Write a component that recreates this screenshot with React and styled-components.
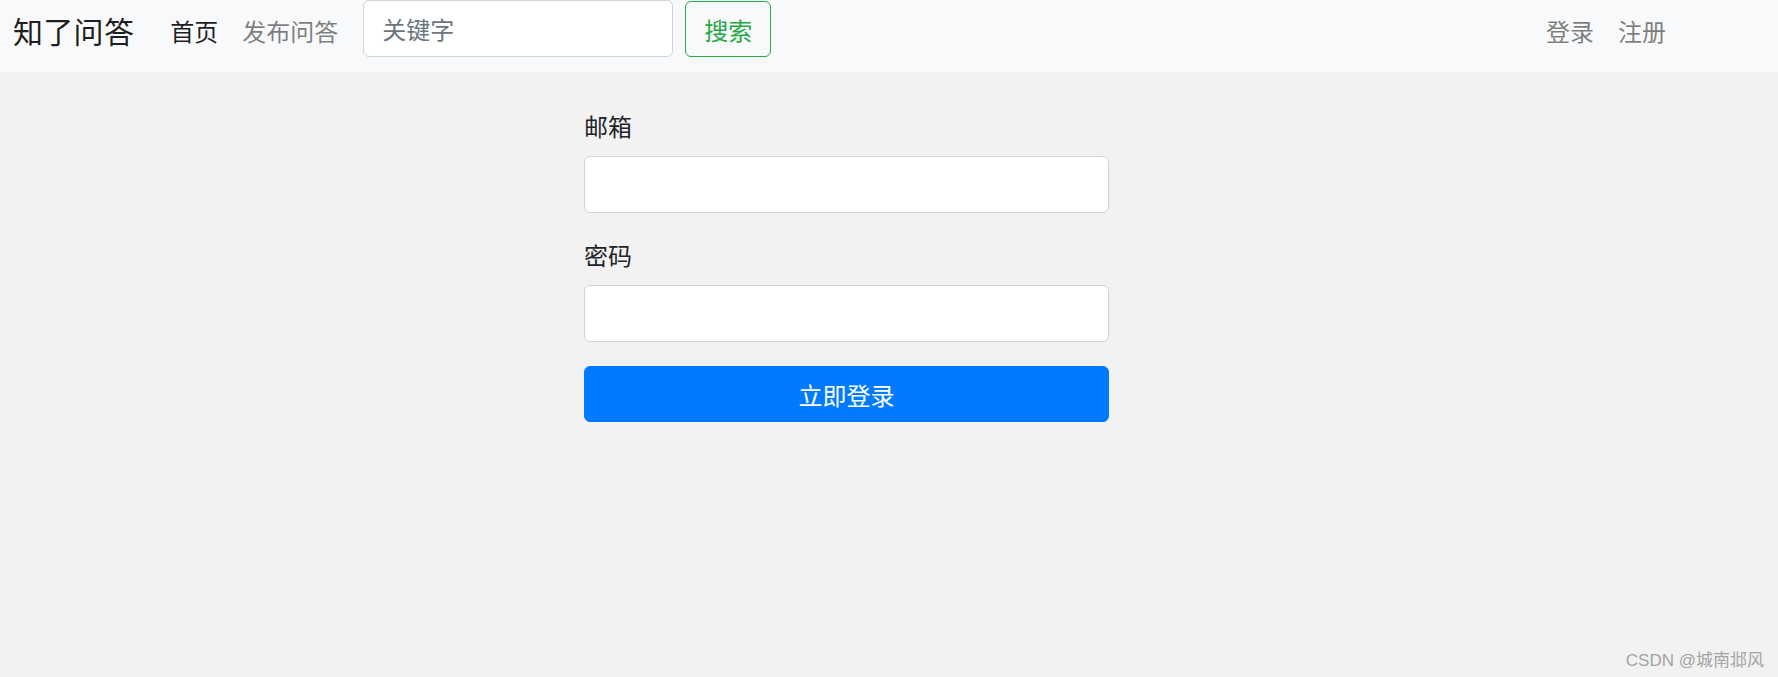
import React from "react";
import styled, { createGlobalStyle } from "styled-components";

const Global = createGlobalStyle`
  html, body { margin: 0; padding: 0; }
  body {
    background: #f2f2f2;
    font-family: "Noto Sans CJK SC", "Noto Sans", "Liberation Sans", sans-serif;
    color: #212529;
    min-height: 677px;
  }
  * { box-sizing: border-box; }
`;

const Page = styled.div`
  position: relative;
  min-height: 677px;
`;

const Navbar = styled.nav`
  height: 72px;
  background: #f8f9fa;
  display: flex;
  align-items: flex-start;
  padding: 0 100px 0 13px;
`;

const Brand = styled.a`
  font-size: 30px;
  line-height: 45px;
  margin-top: 8px;
  margin-right: 24px;
  letter-spacing: 0.3px;
  color: rgba(0, 0, 0, 0.9);
  text-decoration: none;
  white-space: nowrap;
`;

const NavList = styled.div`
  display: flex;
  align-items: flex-start;
  margin-left: ${(p) => (p.$right ? "auto" : "0")};
`;

const NavLink = styled.a`
  font-size: 24px;
  line-height: 36px;
  padding: 0 12px;
  margin-top: 13px;
  color: ${(p) => (p.$active ? "rgba(0,0,0,0.9)" : "rgba(0,0,0,0.5)")};
  text-decoration: none;
  white-space: nowrap;
`;

const SearchForm = styled.form`
  display: flex;
  align-items: flex-start;
  margin-left: 13px;
`;

const SearchInput = styled.input`
  width: 310px;
  height: 57px;
  padding: 0 18px;
  font-size: 24px;
  font-family: inherit;
  color: #495057;
  background: #fff;
  border: 1.5px solid #ced4da;
  border-radius: 6px;
  outline: none;
  &::placeholder { color: #6c757d; }
`;

const SearchButton = styled.button`
  margin-left: 12px;
  margin-top: 1px;
  width: 86px;
  height: 56px;
  font-size: 24px;
  font-family: inherit;
  color: #28a745;
  background: transparent;
  border: 1.5px solid #28a745;
  border-radius: 6px;
  padding: 0;
  cursor: pointer;
`;

const Main = styled.main`
  padding: 36px 0 0 584px;
`;

const Form = styled.form`
  width: 525px;
  display: flex;
  flex-direction: column;
`;

const Group = styled.div`
  display: flex;
  flex-direction: column;
  margin-bottom: 24px;
`;

const Label = styled.label`
  font-size: 24px;
  line-height: 36px;
  margin-bottom: 12px;
  color: #212529;
`;

const Field = styled.input`
  height: 57px;
  width: 100%;
  padding: 0 18px;
  font-size: 24px;
  font-family: inherit;
  background: #fff;
  border: 1.5px solid #ced4da;
  border-radius: 6px;
  outline: none;
`;

const Submit = styled.button`
  height: 56px;
  width: 100%;
  font-size: 24px;
  font-family: inherit;
  color: #fff;
  background: #007bff;
  border: 1.5px solid #007bff;
  border-radius: 6px;
  cursor: pointer;
  padding: 0;
`;

const Watermark = styled.div`
  position: absolute;
  right: 14px;
  bottom: 6px;
  font-size: 17px;
  line-height: 20px;
  color: #a3a3a3;
  font-family: "Liberation Sans", "Noto Sans CJK SC", sans-serif;
`;

export default function App() {
  return (
    <Page>
      <Global />
      <Navbar>
        <Brand href="#">知了问答</Brand>
        <NavList>
          <NavLink $active href="#">首页</NavLink>
          <NavLink href="#">发布问答</NavLink>
        </NavList>
        <SearchForm onSubmit={(e) => e.preventDefault()}>
          <SearchInput placeholder="关键字" />
          <SearchButton type="submit">搜索</SearchButton>
        </SearchForm>
        <NavList $right>
          <NavLink href="#">登录</NavLink>
          <NavLink href="#">注册</NavLink>
        </NavList>
      </Navbar>
      <Main>
        <Form onSubmit={(e) => e.preventDefault()}>
          <Group>
            <Label>邮箱</Label>
            <Field type="email" />
          </Group>
          <Group>
            <Label>密码</Label>
            <Field type="password" />
          </Group>
          <Submit type="submit">立即登录</Submit>
        </Form>
      </Main>
      <Watermark>CSDN @城南邶风</Watermark>
    </Page>
  );
}
